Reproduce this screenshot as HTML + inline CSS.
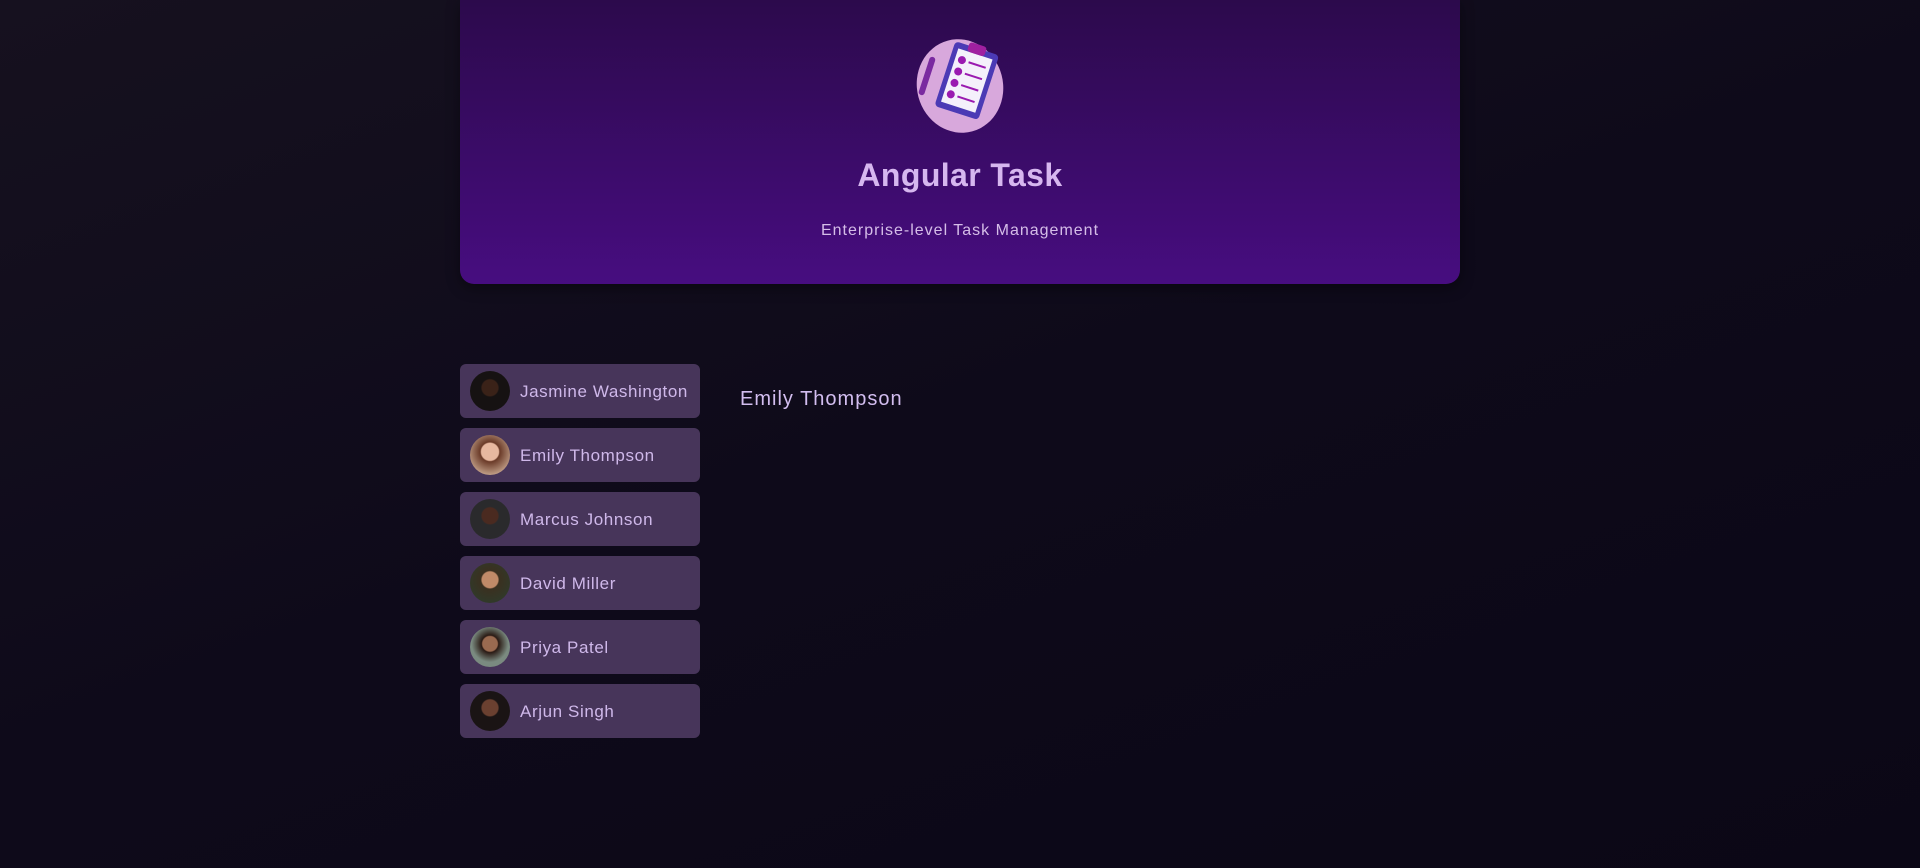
<!DOCTYPE html>
<html><head><meta charset="utf-8"><style>
*{margin:0;padding:0;box-sizing:border-box}
body{width:1920px;height:868px;overflow:hidden;background:linear-gradient(160deg,#16111f 0%,#0e0a1a 50%,#0b0716 100%);font-family:"Liberation Sans",sans-serif;color:#d3bdf0}
.hdr{position:absolute;left:460px;top:0;width:1000px;height:284px;border-radius:0 0 14px 14px;background:linear-gradient(180deg,#2c0a4c 0%,#470d80 100%);text-align:center;box-shadow:0 4px 14px rgba(0,0,0,.4)}
.logo{position:absolute;left:914px;top:36px}
h1{position:absolute;top:157px;left:0;width:100%;font-size:32px;font-weight:bold;color:#d6b7ef;letter-spacing:0.4px}
.sub{position:absolute;top:222px;left:0;width:100%;font-size:16px;color:#d5bde8;letter-spacing:1px}
.btn{position:absolute;left:460px;width:240px;height:54px;border-radius:6px;background:#47355a}
.av{position:absolute;left:10px;top:7px;width:40px;height:40px;border-radius:50%}
.nm{position:absolute;left:60px;top:18px;font-size:17px;color:#cfb8ea;white-space:nowrap;letter-spacing:0.6px}
.sel{position:absolute;left:740px;top:388px;font-size:20px;color:#d2bdef;letter-spacing:1px}
</style></head><body>
<div class="hdr"><h1>Angular Task</h1><div class="sub">Enterprise-level Task Management</div></div>
<svg class="logo" width="92" height="100" viewBox="0 0 92 100">
<ellipse cx="46" cy="50" rx="43" ry="47" fill="#d8a8dc" transform="rotate(-15 46 50)"/>
<g transform="rotate(18 50 50)">
<rect x="28" y="10" width="46" height="68" rx="4" fill="#4b3ab5"/>
<rect x="33" y="16" width="36" height="56" fill="#f4f0fb"/>
<rect x="42" y="6" width="18" height="10" rx="3" fill="#a020a0"/>
<circle cx="40" cy="26" r="4" fill="#9a1ab0"/><rect x="47" y="25" width="18" height="2" fill="#9a1ab0"/>
<circle cx="40" cy="38" r="4" fill="#9a1ab0"/><rect x="47" y="37" width="18" height="2" fill="#9a1ab0"/>
<circle cx="40" cy="50" r="4" fill="#9a1ab0"/><rect x="47" y="49" width="18" height="2" fill="#9a1ab0"/>
<circle cx="40" cy="62" r="4" fill="#9a1ab0"/><rect x="47" y="61" width="18" height="2" fill="#9a1ab0"/>
</g>
<rect x="10" y="20" width="6" height="40" rx="3" fill="#7a2aa0" transform="rotate(18 13 40)"/>
</svg>
<div class="btn" style="top:364px"><div class="av" style="background:radial-gradient(circle at 50% 42%,#3a2218 0 26%,#161212 30%)"></div><div class="nm">Jasmine Washington</div></div>
<div class="btn" style="top:428px"><div class="av" style="background:radial-gradient(circle at 50% 42%,#e7b8a0 0 28%,#6a3a28 32%,#c9a890 80%)"></div><div class="nm">Emily Thompson</div></div>
<div class="btn" style="top:492px"><div class="av" style="background:radial-gradient(circle at 50% 42%,#4a2a20 0 26%,#2a2a2c 30%)"></div><div class="nm">Marcus Johnson</div></div>
<div class="btn" style="top:556px"><div class="av" style="background:radial-gradient(circle at 50% 42%,#c08a68 0 26%,#3a3020 30%,#2f3a2a 80%)"></div><div class="nm">David Miller</div></div>
<div class="btn" style="top:620px"><div class="av" style="background:radial-gradient(circle at 50% 42%,#9a6a50 0 24%,#2a1a14 28%,#7a8a80 60%)"></div><div class="nm">Priya Patel</div></div>
<div class="btn" style="top:684px"><div class="av" style="background:radial-gradient(circle at 50% 42%,#6a4030 0 26%,#1a1414 30%)"></div><div class="nm">Arjun Singh</div></div>
<div class="sel">Emily Thompson</div>
</body></html>
